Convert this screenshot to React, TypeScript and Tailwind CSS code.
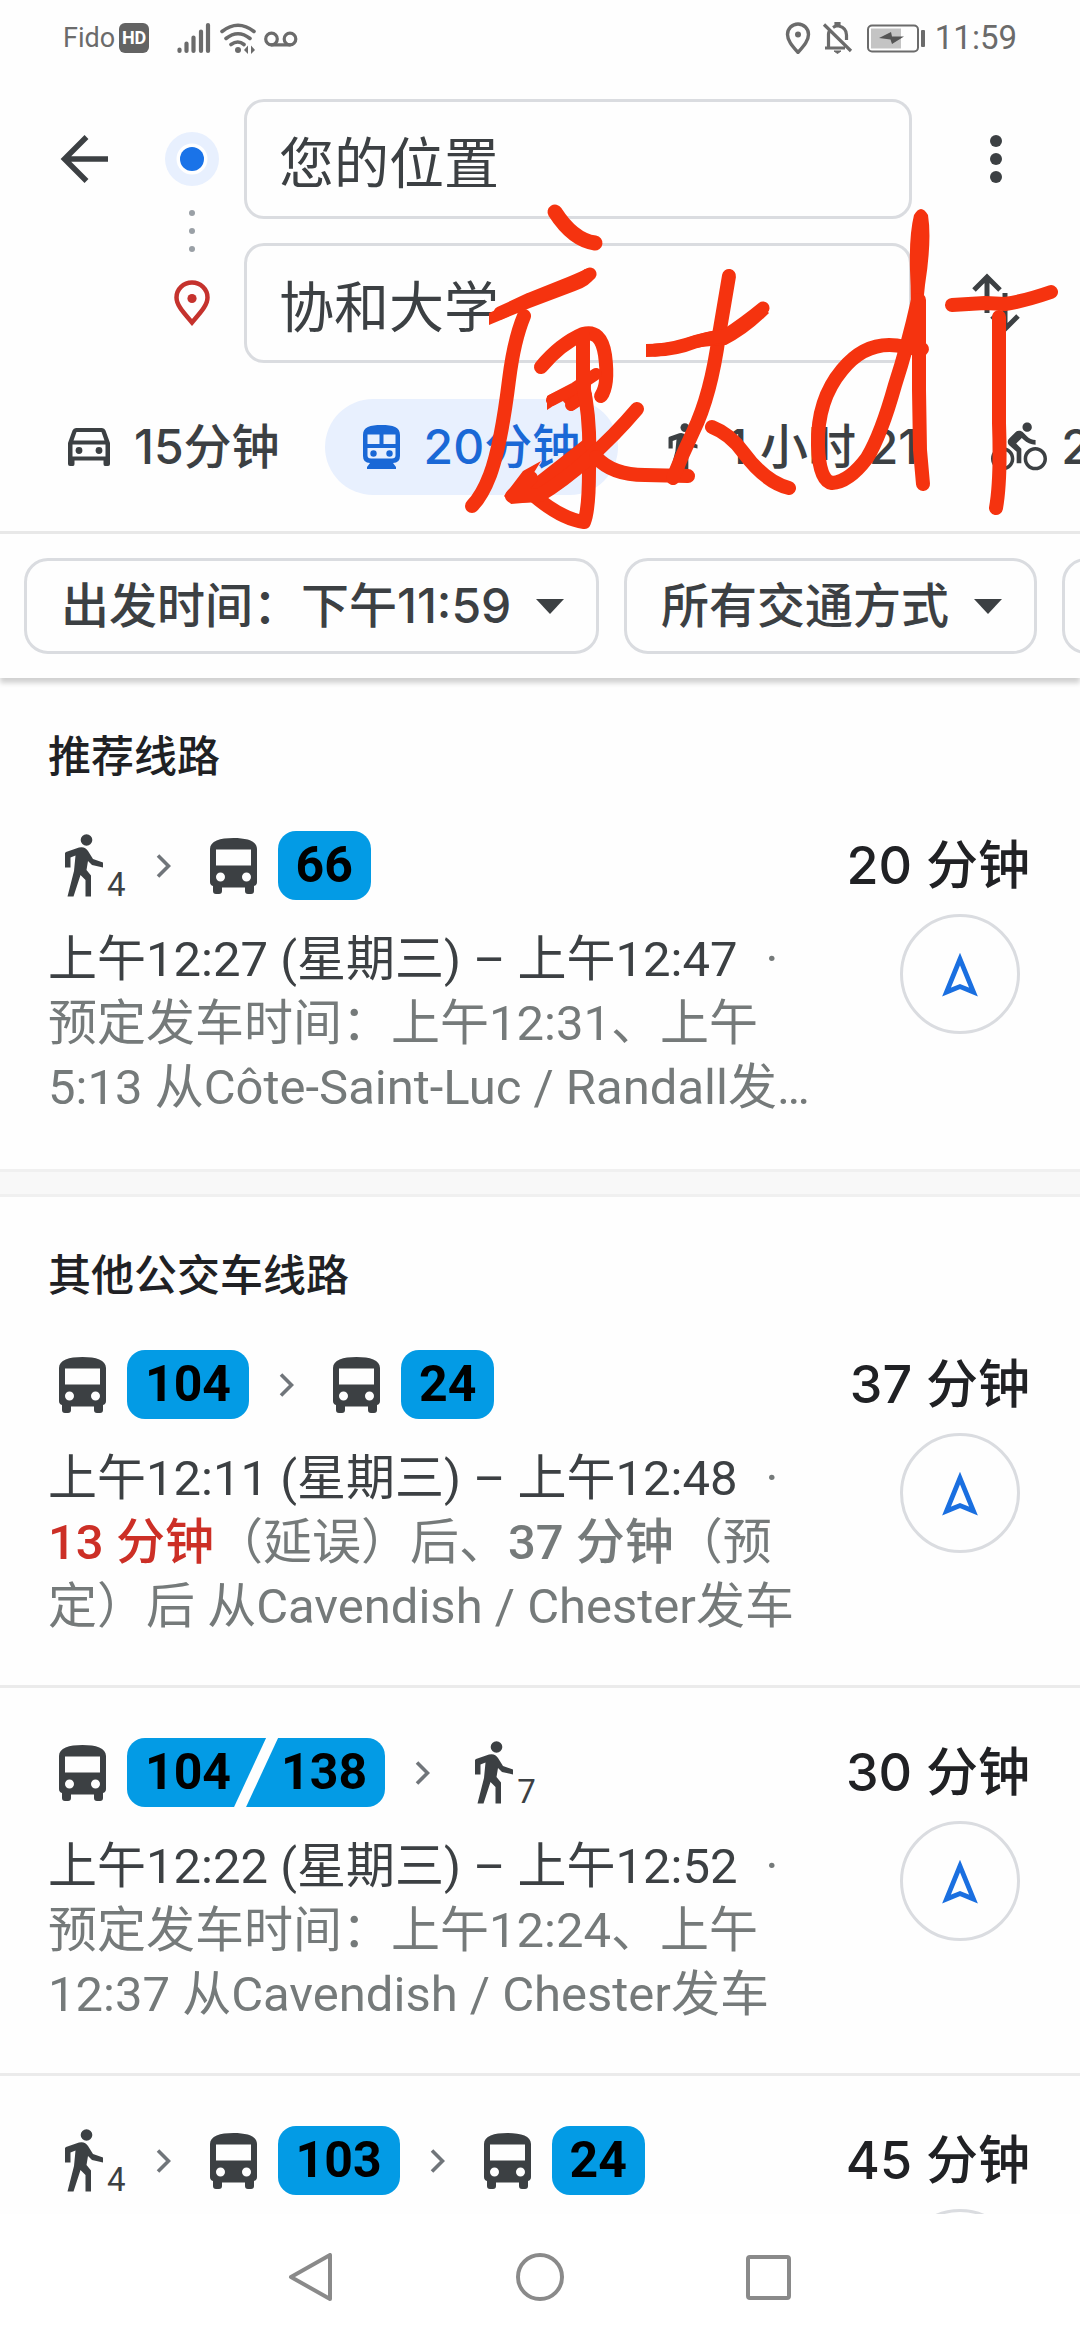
import React from 'react';
import { MdDirectionsBike } from 'react-icons/md';

type Leg =
  | { kind: 'walk'; minutes: number }
  | { kind: 'bus'; lines: string[] };

interface Route {
  id: string;
  duration: string;
  legs: Leg[];
  time: string;
  details: React.ReactNode[];
}

const recommended: Route[] = [
  {
    id: 'r66',
    duration: '20 分钟',
    legs: [{ kind: 'walk', minutes: 4 }, { kind: 'bus', lines: ['66'] }],
    time: '上午12:27 (星期三) – 上午12:47',
    details: ['预定发车时间：上午12:31、上午', '5:13 从Côte-Saint-Luc / Randall发…'],
  },
];

const others: Route[] = [
  {
    id: 'r104-24',
    duration: '37 分钟',
    legs: [{ kind: 'bus', lines: ['104'] }, { kind: 'bus', lines: ['24'] }],
    time: '上午12:11 (星期三) – 上午12:48',
    details: [
      <>
        <b className="font-medium text-[#cc2f26]">13 分钟</b>（延误）后、
        <b className="font-medium">37 分钟</b>（预
      </>,
      '定）后 从Cavendish / Chester发车',
    ],
  },
  {
    id: 'r104-138',
    duration: '30 分钟',
    legs: [{ kind: 'bus', lines: ['104', '138'] }, { kind: 'walk', minutes: 7 }],
    time: '上午12:22 (星期三) – 上午12:52',
    details: ['预定发车时间：上午12:24、上午', '12:37 从Cavendish / Chester发车'],
  },
  {
    id: 'r103-24',
    duration: '45 分钟',
    legs: [
      { kind: 'walk', minutes: 4 },
      { kind: 'bus', lines: ['103'] },
      { kind: 'bus', lines: ['24'] },
    ],
    time: '',
    details: [],
  },
];

const WalkIcon = ({ className }: { className: string }) => (
  <svg viewBox="0 0 38 63" className={className} fill="currentColor" aria-hidden="true">
    <circle cx="21.5" cy="6" r="5.8" />
    <path d="M1 18 14 13.5Q20 12 23 17L28 25 38 28.500V33.500L27 31 23 27 21.500 36 26 41.500V62.500H20.500V46L15.500 41 8.500 62.500H2.500L9 37 10.500 21.500 5.500 23.500V33.500H0V19Z" />
  </svg>
);

const BusIcon = () => (
  <svg viewBox="0 0 47 56" className="h-14 w-[47px]" fill="currentColor" aria-hidden="true">
    <path
      fillRule="evenodd"
      d="M23.500 0C37 0 47 3 47 11V44Q47 47 44 48V53Q44 56 41 56H38Q35 56 35 53V49.500H12V53Q12 56 9 56H6Q3 56 3 53V48Q0 47 0 44V11C0 3 10 0 23.500 0ZM6 11.500V27.500H41V11.500ZM10.500 34.500A4.500 4.500 0 1 0 10.500 43.500A4.500 4.500 0 1 0 10.500 34.500ZM36.500 34.500A4.500 4.500 0 1 0 36.500 43.500A4.500 4.500 0 1 0 36.500 34.500Z"
    />
  </svg>
);

const CarIcon = () => (
  <svg viewBox="0 0 42 38" className="h-[38px] w-[42px]" fill="currentColor" aria-hidden="true">
    <path
      fillRule="evenodd"
      d="M8 0H34Q36.500 0 37.500 2.500L42 15V36Q42 38 40 38H37Q35.500 38 35.500 36V32.500H6.500V36Q6.500 38 5 38H2Q0 38 0 36V15L4.500 2.500Q5.500 0 8 0ZM8.500 4L5.500 12.500H36.500L33.500 4ZM4.500 16.500V28.500H37.500V16.500Z"
    />
    <circle cx="11" cy="22.500" r="3.400" />
    <circle cx="31" cy="22.500" r="3.400" />
  </svg>
);

const TrainIcon = () => (
  <svg viewBox="0 0 37 44" className="h-11 w-[37px]" fill="currentColor" aria-hidden="true">
    <path
      fillRule="evenodd"
      d="M18.500 0C30 0 37 2 37 10V31Q37 38 30 38L33 42V44H4V42L7 38Q0 38 0 31V10C0 2 7 0 18.500 0ZM4.500 9.500V19H16.500V9.500ZM20.500 9.500V19H32.500V9.500ZM4.500 23V30.500Q4.500 33.500 8 33.500H29Q32.500 33.500 32.500 30.500V23Z"
    />
    <circle cx="10.500" cy="28.500" r="3.200" />
    <circle cx="26.500" cy="28.500" r="3.200" />
  </svg>
);

const Chevron = () => (
  <svg viewBox="0 0 15 24" className="ml-[30px] mr-[39px] h-6 w-[15px] text-[#70757a]" aria-hidden="true">
    <path d="M2 1.500 12.500 12 2 22.500" fill="none" stroke="currentColor" strokeWidth="3.600" />
  </svg>
);

const StatusBar = () => (
  <div className="flex h-[75px] shrink-0 items-center px-[63px] text-[#6b6b6b] [font-family:Roboto,sans-serif]">
    <span className="text-[27px] leading-8">Fido</span>
    <span className="ml-1 flex h-[30px] w-[30px] items-center justify-center rounded-md bg-[#636363] text-[18px] font-bold leading-5 text-white">
      HD
    </span>
    <svg viewBox="0 0 122 32" className="ml-[27px] h-8 w-[122px]" fill="none" stroke="currentColor" strokeLinecap="round" aria-hidden="true">
      <path d="M3.500 27.500V29M10.500 21.500V29M17.500 15.500V29M25 9.500V29M32 3V29" strokeWidth="4.200" />
      <path d="M46 9.500Q62 -3 78 9.500M50 16.500Q62 7 74 16.500M55 22.500Q62 17.500 68 22.500" strokeWidth="3.600" />
      <circle cx="62" cy="28" r="3" fill="currentColor" stroke="none" />
      <path d="M72 23.500V32L68 28ZM75 23.500V32L79 28Z" fill="currentColor" stroke="none" />
      <circle cx="95.500" cy="17" r="5.800" strokeWidth="3.200" />
      <circle cx="114" cy="17" r="5.800" strokeWidth="3.200" />
      <path d="M95.500 22.800H114" strokeWidth="3.200" />
    </svg>
    <svg viewBox="0 0 141 32" className="ml-auto h-8 w-[141px]" fill="none" stroke="currentColor" aria-hidden="true">
      <path d="M13 30.500C7 23.500 2.500 18.500 2.500 12.500A10.500 10.500 0 0 1 23.500 12.500C23.500 18.500 19 23.500 13 30.500Z" strokeWidth="3.400" />
      <circle cx="13" cy="12.500" r="3" fill="currentColor" stroke="none" />
      <path d="M39 2.500 66 29M43.500 25.500V12Q43.500 10.500 44.500 9M40 26H60M48 5.500Q49.500 4.500 51 4V1.500H54V4Q61.500 6 61.500 13V18" strokeWidth="3.200" />
      <path d="M49 29H56L52.500 31.500Z" fill="currentColor" />
      <rect x="83" y="3.500" width="50" height="26" rx="4" strokeWidth="2" />
      <rect x="86" y="6.500" width="30" height="20" fill="#c4c4c4" stroke="none" />
      <path d="M94 16 106 10 107 14.500H119L107 22 105.500 17.500Z" fill="#555" stroke="none" />
      <rect x="136" y="8" width="4" height="17" rx="1" fill="currentColor" stroke="none" />
    </svg>
    <time className="ml-[9px] text-[33px] leading-9">11:59</time>
  </div>
);

const DirectionsForm = () => (
  <form className="mt-6 flex text-[#3c4043]">
    <div className="pl-[60px] pt-9">
      <button type="button" aria-label="返回" className="block h-12 w-12">
        <svg viewBox="0 0 48 48" fill="none" stroke="currentColor" strokeWidth="5.500">
          <path d="M48 24H5M26.500 2 4.500 24 26.500 46" />
        </svg>
      </button>
    </div>
    <div className="ml-[57px] flex w-[54px] flex-col items-center pt-[33px]">
      <svg viewBox="0 0 54 54" className="h-[54px] w-[54px]" aria-hidden="true">
        <circle cx="27" cy="27" r="27" fill="#e8f0fe" />
        <circle cx="27" cy="27" r="15.500" fill="#fff" />
        <circle cx="27" cy="27" r="12" fill="#1a73e8" />
      </svg>
      <svg viewBox="0 0 6 42" className="mt-6 h-[42px] w-1.5" fill="#9aa0a6" aria-hidden="true">
        <circle cx="3" cy="3" r="3" />
        <circle cx="3" cy="21" r="3" />
        <circle cx="3" cy="39" r="3" />
      </svg>
      <svg viewBox="0 0 36 46" className="mt-7 h-[46px] w-9" aria-hidden="true">
        <path
          d="M18 42.500C10 33 2.500 25.500 2.500 17.500A15.500 15 0 0 1 33.500 17.500C33.500 25.500 26 33 18 42.500Z"
          fill="none"
          stroke="#c5322d"
          strokeWidth="4.500"
        />
        <circle cx="18" cy="18.500" r="4.600" fill="#c5322d" />
      </svg>
    </div>
    <div className="ml-[25px] flex flex-1 flex-col gap-6">
      <input
        aria-label="出发地"
        defaultValue="您的位置"
        className="h-[120px] w-full rounded-[20px] border-[3px] border-[#dadce0] px-8 text-[55px] leading-[64px]"
      />
      <input
        aria-label="目的地"
        defaultValue="协和大学"
        className="h-[120px] w-full rounded-[20px] border-[3px] border-[#dadce0] px-8 text-[55px] leading-[64px]"
      />
    </div>
    <div className="flex w-[168px] flex-col items-center gap-6">
      <button type="button" aria-label="更多选项" className="flex h-[120px] items-center">
        <svg viewBox="0 0 12 48" className="h-12 w-3" fill="currentColor">
          <circle cx="6" cy="6" r="6" />
          <circle cx="6" cy="24" r="6" />
          <circle cx="6" cy="42" r="6" />
        </svg>
      </button>
      <button type="button" aria-label="交换起点和终点" className="flex h-[120px] items-center">
        <svg viewBox="0 0 48 60" className="h-[60px] w-12" fill="none" stroke="currentColor" strokeWidth="5">
          <path d="M15 40V4M2 17 15 4 28 17M33 20V56M20 43 33 56 46 43" />
        </svg>
      </button>
    </div>
  </form>
);

const tabs = [
  { id: 'car', label: '15分钟', icon: <CarIcon /> },
  { id: 'transit', label: '20分钟', icon: <TrainIcon /> },
  { id: 'walk', label: '1 小时 21', icon: <WalkIcon className="h-12 w-10" /> },
  { id: 'bike', label: '2', icon: <MdDirectionsBike className="-mx-2.5 h-14 w-14" /> },
];

const ModeTabs = () => (
  <nav className="mt-9 flex gap-[7px] overflow-hidden pl-[30px]">
    {tabs.map((tab) => (
      <button
        key={tab.id}
        type="button"
        aria-pressed={tab.id === 'transit'}
        className={`flex h-24 shrink-0 items-center gap-6 whitespace-nowrap rounded-full px-[38px] text-[48px] font-medium leading-[60px] ${
          tab.id === 'transit' ? 'bg-[#e8f0fe] text-[#1a68d6]' : 'text-[#3c4043]'
        }`}
      >
        {tab.icon}
        <span>{tab.label}</span>
      </button>
    ))}
  </nav>
);

const FilterChip = ({ label, value }: { label: string; value: string }) => (
  <label className="flex h-24 shrink-0 items-center rounded-[24px] border-[3px] border-[#dadce0] pl-[34px] pr-8 text-[#3c4043]">
    <select aria-label={label} className="appearance-none bg-transparent text-[48px] font-medium leading-[60px]">
      <option>{value}</option>
    </select>
    <svg viewBox="0 0 28 15" className="ml-6 h-[15px] w-7" fill="currentColor" aria-hidden="true">
      <path d="M0 0H28L14 15Z" />
    </svg>
  </label>
);

const LineBadge = ({ lines }: { lines: string[] }) => {
  const text = 'h-[69px] bg-[#039be5] text-[50px] font-bold leading-[69px] text-black [font-family:Roboto,sans-serif]';
  if (lines.length === 1) {
    return <span className={`ml-[21px] rounded-[18px] px-[18px] ${text}`}>{lines[0]}</span>;
  }
  return (
    <span className="ml-[21px] flex">
      <span className={`rounded-l-[18px] pl-[18px] pr-[35px] [clip-path:polygon(0_0,100%_0,calc(100%-32px)_100%,0_100%)] ${text}`}>
        {lines[0]}
      </span>
      <span className={`-ml-5 rounded-r-[18px] pl-[35px] pr-[18px] [clip-path:polygon(32px_0,100%_0,100%_100%,0_100%)] ${text}`}>
        {lines[1]}
      </span>
    </span>
  );
};

const RouteCard = ({ route }: { route: Route }) => (
  <li className="flex h-[388px] shrink-0 justify-between border-b-[3px] border-[#ebebeb] pl-12 pr-[50px] pt-[50px] last:border-b-0">
    <div className="whitespace-nowrap">
      <div className="flex h-[69px] items-center pl-[11px] text-[#3c4043]">
        {route.legs.map((leg, i) => (
          <React.Fragment key={i}>
            {i > 0 && <Chevron />}
            {leg.kind === 'walk' ? (
              <span className="flex items-end pl-1.5">
                <WalkIcon className="h-[63px] w-[38px]" />
                <span className="ml-1 text-[33px] leading-6 [font-family:Roboto,sans-serif]">{leg.minutes}</span>
              </span>
            ) : (
              <>
                <BusIcon />
                <LineBadge lines={leg.lines} />
              </>
            )}
          </React.Fragment>
        ))}
      </div>
      {route.time && (
        <div className="mt-7 text-[49px] leading-[64px] text-[#757a7a] [font-family:Roboto,'Noto_Sans_CJK_SC',sans-serif]">
          <p>
            <span className="text-[#3c4043]">{route.time}</span>
            <span className="ml-7">·</span>
          </p>
          {route.details.map((line, i) => (
            <p key={i}>{line}</p>
          ))}
        </div>
      )}
    </div>
    <div className="flex shrink-0 flex-col items-end">
      <span className="text-[52px] font-medium leading-[69px] text-[#202124]">{route.duration}</span>
      <button
        type="button"
        aria-label="开始导航"
        className="mr-[10px] mt-[14px] flex h-[120px] w-[120px] shrink-0 items-center justify-center rounded-full border-[3px] border-[#dadce0]"
      >
        <svg viewBox="0 0 36 46" className="h-[46px] w-9" fill="none" stroke="#1a6fe0" strokeWidth="4.800">
          <path d="M18 8 4.500 41 18 35.500 31.500 41Z" />
        </svg>
      </button>
    </div>
  </li>
);

const RouteSection = ({ title, routes }: { title: string; routes: Route[] }) => (
  <section>
    <h2 className="h-[103px] pl-12 pt-[52px] text-[43px] font-medium leading-[52px] text-[#202124]">{title}</h2>
    <ul>
      {routes.map((route) => (
        <RouteCard key={route.id} route={route} />
      ))}
    </ul>
  </section>
);

// Handwritten marker note lying over the search form
const MarkerNote = () => (
  <svg
    viewBox="0 0 1080 560"
    className="pointer-events-none absolute left-0 top-0 w-full"
    fill="none"
    stroke="#f5330f"
    strokeWidth="14"
    strokeLinecap="round"
    strokeLinejoin="round"
    aria-hidden="true"
  >
    {/* 康 */}
    <path d="M555 212Q573 240 595 243" strokeWidth="15" />
    <path d="M489 313 524 297 570 277Q580 273 585 269L595 277Q590 286 575 291L530 308 489 325Z" fill="#f5330f" stroke="none" />
    <path d="M500 313 530 299 570 283Q583 278 590 274" strokeWidth="13" />
    <path d="M524 316Q514 340 509 380 501 445 490 475 482 496 472 506" />
    <path d="M541 367Q560 344 583 334 601 329 605 355 609 385 601 396" />
    <path d="M547 396 574 383 592 371 590 399 572 411 562 400 547 410Z" fill="#f5330f" stroke="none" />
    <path d="M552 400 575 388 596 374M571 405 586 395" strokeWidth="12" />
    <path d="M583 335 583 385Q591 420 589 470 589 510 584 522 561 519 532 494" />
    <path d="M523 471 541 461 527 484 583 440 590 462 553 492 534 502 511 504 504 496Z" fill="#f5330f" stroke="none" />
    <path d="M531 478 512 496 540 495Q562 482 588 459 615 435 637 409" />
    <path d="M596 457Q612 475 645 475L688 476" />
    {/* 大 */}
    <path d="M729 276 719 335Q711 395 693 432 682 455 673 478" />
    <path d="M646 344Q665 344 685 338 706 331 725 329 745 320 760 304L769 313Q748 334 726 345 700 346 682 351 665 357 646 357Z" fill="#f5330f" stroke="none" />
    <path d="M655 350Q675 350 695 342 712 337 725 336 746 322 763 308" strokeWidth="13" />
    <path d="M712 427Q730 434 743 452 765 482 789 488" />
    {/* d */}
    <path d="M914 215Q921 203 928 215 932 240 925 285 921 320 921 345L909 345Q912 310 910 270 909 235 914 215Z" fill="#f5330f" stroke="none" />
    <path d="M918 300Q908 345 895 385 881 435 867 458 849 482 832 483 819 481 818 445 817 400 842 370 868 338 905 347L922 349" />
    <path d="M919 300 919 390 920 450 923 484" />
    {/* T */}
    <path d="M952 305 985 303 1005 304Q1025 301 1051 292" />
    <path d="M999 317 999 423Q1001 480 996 508" />
  </svg>
);

const SystemNav = () => (
  <footer className="flex h-[126px] shrink-0 items-center justify-center gap-[181px] bg-white text-[#8a8a8a]">
    <button type="button" aria-label="后退">
      <svg viewBox="0 0 48 48" className="h-12 w-12" fill="none" stroke="currentColor" strokeWidth="4" strokeLinejoin="round">
        <path d="M43 2V46L4 24Z" />
      </svg>
    </button>
    <button type="button" aria-label="主屏幕">
      <svg viewBox="0 0 48 48" className="h-12 w-12" fill="none" stroke="currentColor" strokeWidth="4">
        <circle cx="24" cy="24" r="22" />
      </svg>
    </button>
    <button type="button" aria-label="最近任务">
      <svg viewBox="0 0 48 48" className="h-12 w-12" fill="none" stroke="currentColor" strokeWidth="4">
        <rect x="3" y="4" width="41" height="41" rx="2" />
      </svg>
    </button>
  </footer>
);

export default function App() {
  return (
    <div
      lang="zh-CN"
      className="relative flex h-screen flex-col overflow-hidden bg-[#fefefe] [font-family:Inter,'Noto_Sans_CJK_SC',sans-serif]"
    >
      <StatusBar />
      <header className="relative shrink-0 shadow-[0_5px_5px_rgba(0,0,0,0.18)]">
        <DirectionsForm />
        <ModeTabs />
        <div className="mt-9 flex gap-[25px] overflow-hidden border-t-[3px] border-[#e8e8e8] py-6 pl-6">
          <FilterChip label="出发时间" value="出发时间：下午11:59" />
          <FilterChip label="交通方式" value="所有交通方式" />
          <button
            type="button"
            aria-label="更多筛选条件"
            className="h-24 w-60 shrink-0 rounded-[24px] border-[3px] border-[#dadce0]"
          />
        </div>
      </header>
      <main className="min-h-0 flex-1 overflow-hidden">
        <RouteSection title="推荐线路" routes={recommended} />
        <div className="h-7 border-y-[3px] border-[#f0f0f0] bg-[#f8f8f8]" />
        <RouteSection title="其他公交车线路" routes={others} />
      </main>
      <SystemNav />
      <MarkerNote />
    </div>
  );
}
